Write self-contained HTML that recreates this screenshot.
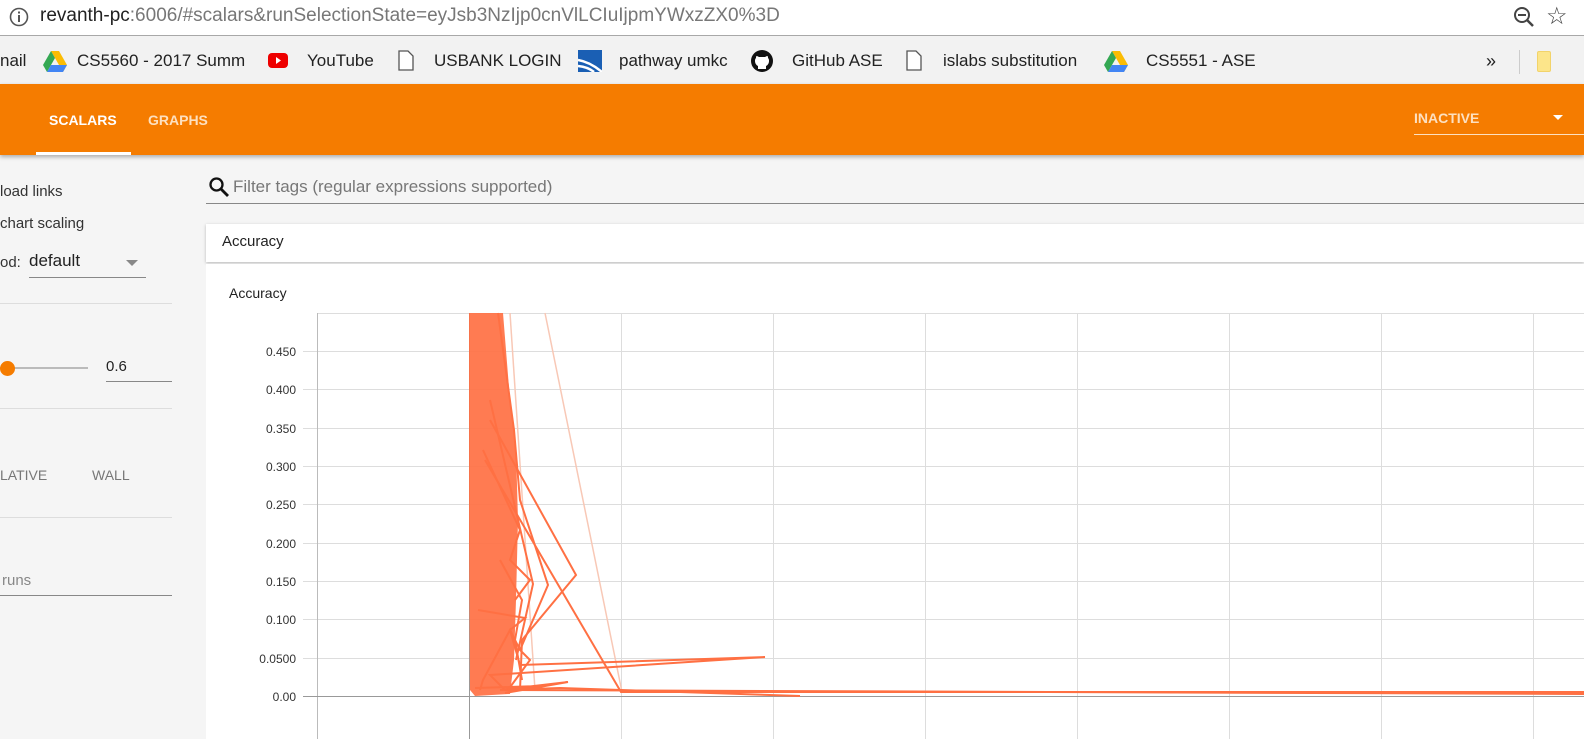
<!DOCTYPE html>
<html><head><meta charset="utf-8"><style>
*{margin:0;padding:0;box-sizing:border-box}
body{width:1584px;height:739px;overflow:hidden;background:#f5f5f5;font-family:"Liberation Sans",sans-serif;position:relative}
.abs{position:absolute}
.addr{left:0;top:0;width:1584px;height:36px;background:#fff;border-bottom:1px solid #a8a8a8}
.bm{left:0;top:36px;width:1584px;height:48px;background:#f2f2f2;font-size:17px;color:#222}
.bm span{position:absolute;top:15px;white-space:nowrap}
.bar{left:0;top:84px;width:1584px;height:71px;background:#f57c00;box-shadow:0 2px 4px rgba(0,0,0,.3)}
.side{font-size:15px;color:#333}
.hr{height:1px;background:#ddd}
</style></head><body>
<div class="abs addr">
<svg class="abs" style="left:8px;top:6px" width="22" height="22"><circle cx="11" cy="11" r="8.5" fill="none" stroke="#555" stroke-width="1.6"/><rect x="10" y="9" width="2" height="7" fill="#555"/><rect x="10" y="5.5" width="2" height="2" fill="#555"/></svg>
<div class="abs" style="left:40px;top:5px;font-size:19px;color:#222;white-space:nowrap">revanth-pc<span style="color:#777">:6006/#scalars&amp;runSelectionState=eyJsb3NzIjp0cnVlLCIuIjpmYWxzZX0%3D</span></div>
<svg class="abs" style="left:1512px;top:5px" width="24" height="24"><circle cx="10" cy="10" r="7" fill="none" stroke="#444" stroke-width="2"/><line x1="15" y1="15" x2="21" y2="21" stroke="#444" stroke-width="2.5"/><line x1="6" y1="10" x2="14" y2="10" stroke="#444" stroke-width="2"/></svg>
<div class="abs" style="left:1546px;top:2px;font-size:24px;color:#444">☆</div>
</div>
<div class="abs bm">
<span style="left:0">nail</span>
<svg class="abs" style="left:43px;top:15px" width="24" height="22"><polygon points="8,0 16,0 24,14 20,21" fill="#fbbc04"/><polygon points="8,0 0,14 4,21 12,7" fill="#34a853"/><polygon points="4,21 20,21 24,14 8,14" fill="#4285f4"/></svg>
<span style="left:77px">CS5560 - 2017 Summ</span>
<svg class="abs" style="left:268px;top:17px" width="20" height="15"><rect width="20" height="15" rx="4" fill="#e00"/><polygon points="8,4 8,11 13,7.5" fill="#fff"/></svg>
<span style="left:307px">YouTube</span>
<svg class="abs" style="left:398px;top:14px" width="16" height="21"><path d="M1 1h9l5 5v14H1z" fill="#fff" stroke="#555" stroke-width="1.3"/></svg>
<span style="left:434px">USBANK LOGIN</span>
<svg class="abs" style="left:578px;top:14px" width="24" height="22"><rect width="24" height="22" fill="#1a5fb4"/><path d="M0 10 Q12 12 24 22 M0 16 Q10 17 16 22" stroke="#fff" stroke-width="2.5" fill="none"/></svg>
<span style="left:619px">pathway umkc</span>
<svg class="abs" style="left:751px;top:14px" width="22" height="22"><circle cx="11" cy="11" r="11" fill="#111"/><path d="M7 19v-3c-2-1-3-3-3-5 0-1 0-2 1-3 0-1 0-2 1-2l2 1h6l2-1c1 0 1 1 1 2 1 1 1 2 1 3 0 2-1 4-3 5v3z" fill="#fff"/></svg>
<span style="left:792px">GitHub ASE</span>
<svg class="abs" style="left:906px;top:14px" width="16" height="21"><path d="M1 1h9l5 5v14H1z" fill="#fff" stroke="#555" stroke-width="1.3"/></svg>
<span style="left:943px">islabs substitution</span>
<svg class="abs" style="left:1104px;top:15px" width="24" height="22"><polygon points="8,0 16,0 24,14 20,21" fill="#fbbc04"/><polygon points="8,0 0,14 4,21 12,7" fill="#34a853"/><polygon points="4,21 20,21 24,14 8,14" fill="#4285f4"/></svg>
<span style="left:1146px">CS5551 - ASE</span>
<span style="left:1486px;font-size:18px">»</span>
<div class="abs" style="left:1519px;top:14px;width:1px;height:24px;background:#ccc"></div>
<div class="abs" style="left:1537px;top:15px;width:14px;height:21px;background:#fce58a;border:1px solid #f2d36a;border-radius:2px"></div>
</div>
<div class="abs bar">
<div class="abs" style="left:49px;top:28px;color:#fff;font-weight:bold;font-size:14px">SCALARS</div>
<div class="abs" style="left:148px;top:28px;color:#fde0c0;font-weight:bold;font-size:14px">GRAPHS</div>
<div class="abs" style="left:36px;top:68px;width:95px;height:3px;background:#fff"></div>
<div class="abs" style="left:1414px;top:26px;color:#fde0c0;font-weight:bold;font-size:14px">INACTIVE</div>
<div class="abs" style="left:1553px;top:31px;width:0;height:0;border-left:5px solid transparent;border-right:5px solid transparent;border-top:5px solid #fff"></div>
<div class="abs" style="left:1414px;top:50px;width:170px;height:1px;background:#fde0c0"></div>
</div>
<div class="abs side" style="left:0;top:183px">load links</div>
<div class="abs side" style="left:0;top:215px">chart scaling</div>
<div class="abs side" style="left:0;top:254px">od:</div>
<div class="abs" style="left:29px;top:251px;font-size:17px;color:#222">default</div>
<div class="abs" style="left:126px;top:260px;border-left:6px solid transparent;border-right:6px solid transparent;border-top:6px solid #888"></div>
<div class="abs" style="left:29px;top:277px;width:117px;height:1px;background:#888"></div>
<div class="abs hr" style="left:0;top:303px;width:172px"></div>
<div class="abs" style="left:0;top:367px;width:88px;height:2px;background:#bbb"></div>
<div class="abs" style="left:0;top:361px;width:15px;height:15px;border-radius:50%;background:#f57c00"></div>
<div class="abs" style="left:106px;top:358px;font-size:15px;color:#222">0.6</div>
<div class="abs" style="left:106px;top:381px;width:66px;height:1px;background:#888"></div>
<div class="abs hr" style="left:0;top:408px;width:172px"></div>
<div class="abs" style="left:0;top:467px;font-size:14px;color:#777">LATIVE</div>
<div class="abs" style="left:92px;top:467px;font-size:14px;color:#777">WALL</div>
<div class="abs hr" style="left:0;top:517px;width:172px"></div>
<div class="abs" style="left:2px;top:572px;font-size:15px;color:#888">runs</div>
<div class="abs" style="left:0;top:595px;width:172px;height:1px;background:#888"></div>
<svg class="abs" style="left:208px;top:176px" width="22" height="22"><circle cx="8.5" cy="8.5" r="6" fill="none" stroke="#111" stroke-width="2.3"/><line x1="13" y1="13" x2="20" y2="20" stroke="#111" stroke-width="2.8"/></svg>
<div class="abs" style="left:233px;top:177px;font-size:17px;color:#777">Filter tags (regular expressions supported)</div>
<div class="abs" style="left:206px;top:203px;width:1378px;height:1px;background:#888"></div>
<div class="abs" style="left:206px;top:224px;width:1378px;height:38px;background:#fff;box-shadow:0 1px 3px rgba(0,0,0,.25)"></div>
<div class="abs" style="left:222px;top:233px;font-size:15px;color:#222">Accuracy</div>
<div class="abs" style="left:206px;top:264px;width:1378px;height:475px;background:#fff"></div>
<div class="abs" style="left:229px;top:285px;font-size:14px;color:#222">Accuracy</div>
<svg class="abs" style="left:0;top:0" width="1584" height="739">
<g stroke="#ddd" stroke-width="1">
<line x1="317" y1="313.5" x2="1584" y2="313.5"/>
<line x1="303" y1="351.5" x2="1584" y2="351.5"/><line x1="303" y1="389.5" x2="1584" y2="389.5"/><line x1="303" y1="428.5" x2="1584" y2="428.5"/><line x1="303" y1="466.5" x2="1584" y2="466.5"/><line x1="303" y1="504.5" x2="1584" y2="504.5"/><line x1="303" y1="543.5" x2="1584" y2="543.5"/><line x1="303" y1="581.5" x2="1584" y2="581.5"/><line x1="303" y1="619.5" x2="1584" y2="619.5"/><line x1="303" y1="658.5" x2="1584" y2="658.5"/>
<line x1="621.5" y1="313" x2="621.5" y2="739"/><line x1="773.5" y1="313" x2="773.5" y2="739"/><line x1="925.5" y1="313" x2="925.5" y2="739"/><line x1="1077.5" y1="313" x2="1077.5" y2="739"/><line x1="1229.5" y1="313" x2="1229.5" y2="739"/><line x1="1381.5" y1="313" x2="1381.5" y2="739"/><line x1="1533.5" y1="313" x2="1533.5" y2="739"/>
</g>
<line x1="317.5" y1="313" x2="317.5" y2="739" stroke="#bbb"/>
<line x1="469.5" y1="313" x2="469.5" y2="739" stroke="#999"/>
<line x1="303" y1="696.5" x2="1584" y2="696.5" stroke="#999"/>
<g font-family="Liberation Sans" font-size="12" fill="#333" text-anchor="end">
<text x="296" y="356">0.450</text><text x="296" y="394">0.400</text><text x="296" y="433">0.350</text><text x="296" y="471">0.300</text><text x="296" y="509">0.250</text><text x="296" y="548">0.200</text><text x="296" y="586">0.150</text><text x="296" y="624">0.100</text><text x="296" y="663">0.0500</text><text x="296" y="701">0.00</text>
</g>
<g stroke="#f8c8b6" stroke-width="1.5" fill="none"><line x1="545" y1="313" x2="622" y2="692"/><line x1="510" y1="313" x2="535" y2="690"/></g>
<polygon points="469,313 503,313 510,400 516,450 518,520 516,600 514,660 510,694 475,696 470,690 469,540" fill="#ff7043" opacity=".92"/>
<g stroke="#ff7043" stroke-width="2" fill="none">
<path d="M498 313 L514 430 L520 500 L548 585 L520 650"/>
<path d="M490 400 L533 584 L516 660"/>
<path d="M490 420 L576 575 L522 640 L520 690"/>
<path d="M485 460 L621 692 L1584 692"/>
<path d="M480 690 L483 680 L510 630 L520 665 L765 657 L490 675 L505 690 L1584 694"/>
<path d="M475 688 L540 686 L505 693 L568 682 L500 690 L560 688 L800 696"/>
<path d="M478 610 L525 618 L510 630 L520 650 L530 660 L508 690"/>
<path d="M483 450 L520 530 L510 560 L530 580 L515 600"/>
<path d="M500 560 L522 600 L515 640 L522 680"/>
</g>
</svg>
</body></html>
